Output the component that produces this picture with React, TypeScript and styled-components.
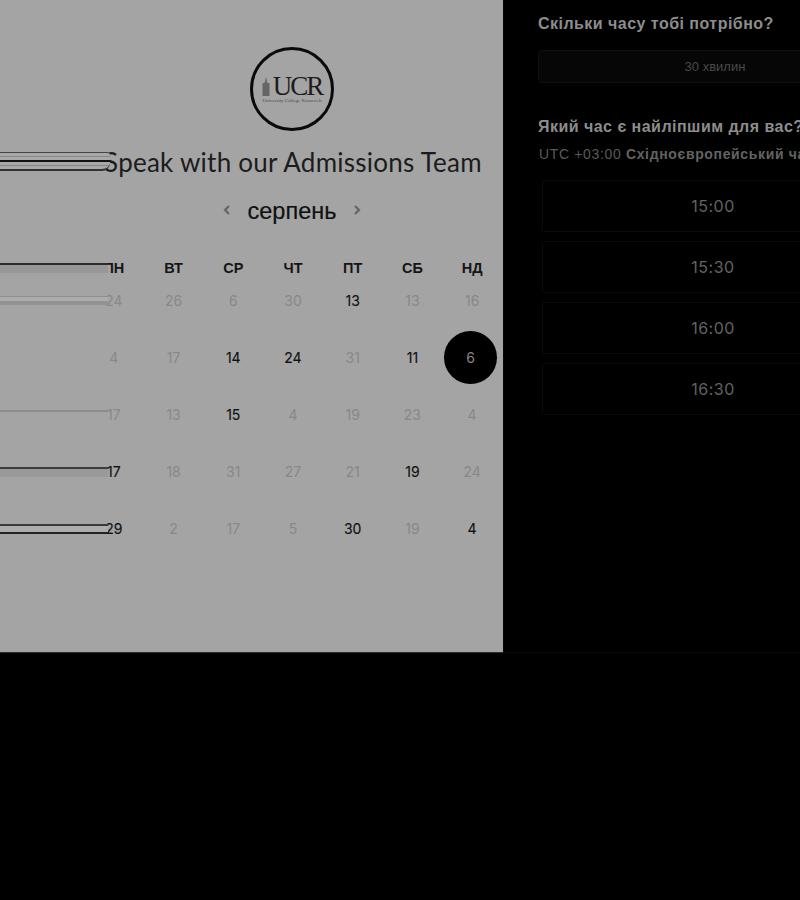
import React from "react";
import styled, { createGlobalStyle } from "styled-components";

const GlobalStyle = createGlobalStyle`
  html, body {
    margin: 0;
    padding: 0;
    background: #000;
    font-family: "Liberation Sans", Arial, sans-serif;
  }
`;

type Day = { n: number; on?: boolean; selected?: boolean };
type Streak = { top: number; height: number; color: string };

const weekdays = ["ПН", "ВТ", "СР", "ЧТ", "ПТ", "СБ", "НД"];

const weeks: Day[][] = [
  [{ n: 24 }, { n: 26 }, { n: 6 }, { n: 30 }, { n: 13, on: true }, { n: 13 }, { n: 16 }],
  [{ n: 4 }, { n: 17 }, { n: 14, on: true }, { n: 24, on: true }, { n: 31 }, { n: 11, on: true }, { n: 6, selected: true }],
  [{ n: 17 }, { n: 13 }, { n: 15, on: true }, { n: 4 }, { n: 19 }, { n: 23 }, { n: 4 }],
  [{ n: 17, on: true }, { n: 18 }, { n: 31 }, { n: 27 }, { n: 21 }, { n: 19, on: true }, { n: 24 }],
  [{ n: 29, on: true }, { n: 2 }, { n: 17 }, { n: 5 }, { n: 30, on: true }, { n: 19 }, { n: 4, on: true }],
];

const weekStreaks: Streak[][] = [
  [
    { top: 24, height: 1, color: "#8f8f8f" },
    { top: 25, height: 4, color: "#acacac" },
    { top: 29, height: 4, color: "#929292" },
  ],
  [],
  [{ top: 24, height: 2, color: "#8c8c8c" }],
  [
    { top: 24, height: 2, color: "#3c3c3c" },
    { top: 26, height: 8, color: "#999" },
  ],
  [
    { top: 24, height: 2, color: "#3a3a3a" },
    { top: 26, height: 6, color: "#adadad" },
    { top: 32, height: 2, color: "#222" },
  ],
];

const times = ["15:00", "15:30", "16:00", "16:30"];

const Page = styled.div`
  width: 800px;
  height: 900px;
  overflow: hidden;
  background: #000;
`;

const Split = styled.div`
  display: flex;
  height: 652px;
  border-bottom: 1px solid #0c0c0c;
`;

const CalendarPanel = styled.section`
  flex: none;
  box-sizing: border-box;
  width: 503px;
  padding: 47px 2px 0 83px;
  background: #a4a4a4;
  box-shadow: 0 1px 1px #2a2a2a;
  display: flex;
  flex-direction: column;
  align-items: center;
`;

const LogoRing = styled.div`
  box-sizing: border-box;
  width: 84px;
  height: 84px;
  border: 3px solid #0a0a0a;
  border-radius: 50%;
  display: flex;
  flex-direction: column;
  align-items: center;
  justify-content: center;
`;

const LogoMark = styled.div`
  display: flex;
  align-items: center;
  gap: 3px;
`;

const LogoLetters = styled.span`
  font-family: "Liberation Serif", serif;
  font-size: 27px;
  line-height: 24px;
  letter-spacing: -2px;
  color: #1c1c1c;
`;

const LogoCaption = styled.span`
  font-family: "Liberation Serif", serif;
  font-size: 5px;
  line-height: 6px;
  white-space: nowrap;
  color: #4a4a4a;
`;

const Title = styled.h1`
  position: relative;
  align-self: stretch;
  margin: 15px -1px 0 1px;
  text-align: center;
  font-family: Lato, sans-serif;
  font-weight: 400;
  font-size: 26px;
  line-height: 32px;
  letter-spacing: 0.25px;
  color: #1c1c1c;
  white-space: nowrap;
`;

const TitleStreak = styled.span`
  position: absolute;
  left: -84px;
  top: 6px;
  width: 110px;
  height: 19px;
  box-sizing: border-box;
  border-top: 1px solid #444;
  border-bottom: 2px solid #333;
  background: linear-gradient(
    #a8a8a8 0 3px,
    #888 3px 4px,
    #a8a8a8 4px 7px,
    #111 7px 9px,
    #a8a8a8 9px 12px,
    #888 12px 13px,
    #a8a8a8 13px 100%
  );
  border-radius: 0 3px 8px 0;
`;

const MonthRow = styled.div`
  display: flex;
  align-items: center;
  justify-content: center;
  gap: 15px;
  margin-top: 20px;
  height: 26px;
`;

const MonthName = styled.span`
  font-size: 23.5px;
  line-height: 26px;
  color: #101010;
  -webkit-text-stroke: 0.2px #101010;
`;

const Arrow = styled.svg`
  width: 12px;
  height: 12px;
  margin-top: -2px;
  fill: none;
  stroke: #666;
  stroke-width: 2.2;
`;

const Grid = styled.div`
  position: relative;
  align-self: stretch;
  display: grid;
  grid-template-columns: repeat(7, 1fr);
  justify-items: center;
  align-items: center;
`;

const Heading = styled(Grid)`
  margin: 40px -1px 0 1px;
  height: 8px;
  grid-template-rows: 8px;
`;

const Weekday = styled.span`
  font-size: 14.5px;
  font-weight: 700;
  color: #151515;
`;

const Week = styled(Grid)`
  height: 57px;
`;

const DayCell = styled.span<{ $on?: boolean; $selected?: boolean }>`
  width: 53px;
  height: 53px;
  margin: ${(p) => (p.$selected ? "-1px 3px 0 0" : "0")};
  border-radius: 50%;
  display: flex;
  align-items: center;
  justify-content: center;
  font-family: Inter, sans-serif;
  font-size: 14px;
  color: ${(p) => (p.$selected ? "#858585" : p.$on ? "#111" : "#888")};
  background: ${(p) => (p.$selected ? "#000" : "transparent")};
  -webkit-text-stroke: ${(p) => (p.$on ? "0.15px #111" : "0")};
`;

const RowStreak = styled.span`
  position: absolute;
  left: -84px;
  width: 108px;
`;

const Weeks = styled.div`
  align-self: stretch;
  margin: 0 -1px 0 1px;
`;

const HeadingStreak = styled(RowStreak)`
  top: -1px;
  height: 10px;
  border-top: 2px solid #2c2c2c;
  background: #979797;
  box-sizing: border-box;
`;

const BookingPanel = styled.section`
  flex: 1;
  min-width: 0;
  padding: 15px 0 0 35px;
  overflow: hidden;
  white-space: nowrap;
`;

const Question = styled.h2`
  margin: 0;
  font-size: 16px;
  line-height: 18px;
  font-weight: 700;
  letter-spacing: 0.47px;
  color: #8d8d8d;
`;

const DurationBox = styled.div`
  box-sizing: border-box;
  width: 354px;
  height: 33px;
  margin: 17px 0 35px;
  border: 1px solid #0f0f0f;
  border-radius: 3px;
  background: #060606;
  display: flex;
  align-items: center;
  justify-content: center;
  font-size: 13px;
  color: #4a4a4a;
`;

const Zone = styled.p`
  margin: 9px 0 0 1px;
  font-size: 14px;
  line-height: 18px;
  letter-spacing: 0.65px;
  color: #5a5a5a;

  strong {
    font-weight: 700;
    color: #636363;
  }
`;

const Slots = styled.div`
  display: flex;
  flex-direction: column;
  gap: 9px;
  margin: 17px 0 0 4px;
`;

const Slot = styled.div`
  box-sizing: border-box;
  width: 342px;
  height: 52px;
  border: 1px solid #0c0c0c;
  border-radius: 3px;
  display: flex;
  align-items: center;
  justify-content: center;
  font-family: Inter, sans-serif;
  font-size: 16px;
  letter-spacing: 0.5px;
  color: #636363;
`;

export default function App() {
  return (
    <Page>
      <GlobalStyle />
      <Split>
        <CalendarPanel>
          <LogoRing>
            <LogoMark>
              <svg width="8" height="19" viewBox="0 0 8 19">
                <path d="M4 0 L5.5 6 H7.5 V19 H0.5 V6 H2.5 Z" fill="#666" />
              </svg>
              <LogoLetters>UCR</LogoLetters>
            </LogoMark>
            <LogoCaption>University College Roosevelt</LogoCaption>
          </LogoRing>
          <Title>
            Speak with our Admissions Team
            <TitleStreak />
          </Title>
          <MonthRow>
            <Arrow viewBox="0 0 12 12">
              <path d="M8 2 L4 6 L8 10" />
            </Arrow>
            <MonthName>серпень</MonthName>
            <Arrow viewBox="0 0 12 12">
              <path d="M4 2 L8 6 L4 10" />
            </Arrow>
          </MonthRow>
          <Heading>
            <HeadingStreak />
            {weekdays.map((d) => (
              <Weekday key={d}>{d}</Weekday>
            ))}
          </Heading>
          <Weeks>
            {weeks.map((week, i) => (
              <Week key={i}>
                {weekStreaks[i].map((s, j) => (
                  <RowStreak
                    key={j}
                    style={{ top: s.top, height: s.height, background: s.color }}
                  />
                ))}
                {week.map((d, j) => (
                  <DayCell key={j} $on={d.on} $selected={d.selected}>
                    {d.n}
                  </DayCell>
                ))}
              </Week>
            ))}
          </Weeks>
        </CalendarPanel>
        <BookingPanel>
          <Question>Скільки часу тобі потрібно?</Question>
          <DurationBox>30 хвилин</DurationBox>
          <Question>Який час є найліпшим для вас?</Question>
          <Zone>
            UTC +03:00 <strong>Східноєвропейський час</strong>
          </Zone>
          <Slots>
            {times.map((t) => (
              <Slot key={t}>{t}</Slot>
            ))}
          </Slots>
        </BookingPanel>
      </Split>
    </Page>
  );
}
